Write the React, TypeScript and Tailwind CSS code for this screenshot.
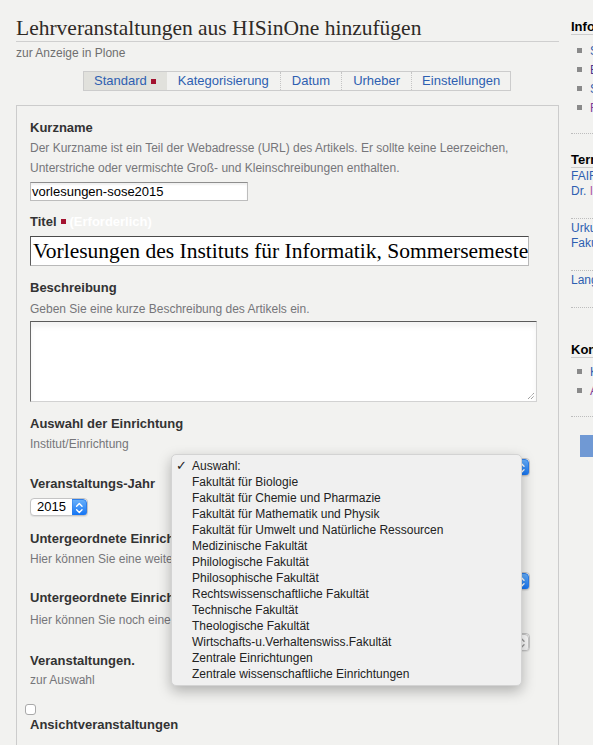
import React from "react";

const Stepper = ({ disabled = false }: { disabled?: boolean }) => (
  <svg width="15" height="18" viewBox="0 0 15 18" className="block">
    <defs>
      <linearGradient id={disabled ? "sgd" : "sg"} x1="0" y1="0" x2="0" y2="1">
        <stop offset="0" stopColor={disabled ? "#ffffff" : "#69b1fb"} />
        <stop offset="1" stopColor={disabled ? "#f4f4f4" : "#0d6ff3"} />
      </linearGradient>
    </defs>
    <path
      d="M0 0.5 H11 A3.5 3.5 0 0 1 14.5 4 V14 A3.5 3.5 0 0 1 11 17.5 H0 Z"
      fill={`url(#${disabled ? "sgd" : "sg"})`}
      stroke={disabled ? "#c8c8c8" : "#2f7ee8"}
      strokeWidth="1"
    />
    <path d="M4.6 7.2 L7.3 4.6 L10 7.2" fill="none" stroke={disabled ? "#9a9a9a" : "#fff"} strokeWidth="1.4" strokeLinecap="round" strokeLinejoin="round" />
    <path d="M4.6 10.8 L7.3 13.4 L10 10.8" fill="none" stroke={disabled ? "#9a9a9a" : "#fff"} strokeWidth="1.4" strokeLinecap="round" strokeLinejoin="round" />
  </svg>
);

const WideSelect = ({ disabled = false }: { disabled?: boolean }) => (
  <div className="flex justify-end w-[500px] h-[18px]">
    <div className="flex h-[18px] w-[340px] rounded-[4px] bg-white border border-[#c4c4c4] shadow-[0_1px_1px_rgba(0,0,0,0.08)] overflow-hidden">
      <div className="flex-1" />
      <Stepper disabled={disabled} />
    </div>
  </div>
);

const Label = ({ children, className = "" }: { children: React.ReactNode; className?: string }) => (
  <div className={`text-[13px] leading-[16px] font-bold text-[#333] ${className}`}>{children}</div>
);

const Help = ({ children, className = "" }: { children: React.ReactNode; className?: string }) => (
  <div className={`text-[12px] leading-[20px] text-[#76767a] ${className}`}>{children}</div>
);

const RedSq = () => <span className="inline-block w-[5px] h-[5px] bg-[#a3122f] ml-[4px] align-middle relative top-[-1px]" />;

const menuItems = [
  "Fakultät für Biologie",
  "Fakultät für Chemie und Pharmazie",
  "Fakultät für Mathematik und Physik",
  "Fakultät für Umwelt und Natürliche Ressourcen",
  "Medizinische Fakultät",
  "Philologische Fakultät",
  "Philosophische Fakultät",
  "Rechtswissenschaftliche Fakultät",
  "Technische Fakultät",
  "Theologische Fakultät",
  "Wirtschafts-u.Verhaltenswiss.Fakultät",
  "Zentrale Einrichtungen",
  "Zentrale wissenschaftliche Einrichtungen",
];

const Bullet = ({ children, color = "text-[#2e5fb1]" }: { children: React.ReactNode; color?: string }) => (
  <div className="flex items-center h-[19px]">
    <span className="w-[5px] h-[5px] bg-[#8a8a8a] ml-[6px] mr-[8px] shrink-0" />
    <span className={`text-[12px] ${color} whitespace-nowrap`}>{children}</span>
  </div>
);

const Dotted = ({ className = "" }: { className?: string }) => (
  <div className={`border-t border-dotted border-[#bdbdbd] w-[200px] ${className}`} />
);

export default function App() {
  return (
    <div className="relative w-[593px] h-[745px] overflow-hidden bg-[#f2f2f0] flex font-['Liberation_Sans',Arial,sans-serif]">
      {/* main column */}
      <div className="w-[543px] ml-[16px] shrink-0">
        <h1 className="pt-[15px] leading-[26px] text-[21.5px] text-[#2f2a26] font-['Liberation_Serif','Times_New_Roman',serif] font-normal border-b border-[#cfcfcf] whitespace-nowrap">
          Lehrveranstaltungen aus HISinOne hinzufügen
        </h1>
        <div className="mt-[3px] text-[12px] leading-[16px] text-[#6f6f6f]">zur Anzeige in Plone</div>

        {/* tabs */}
        <div className="mt-[10px] ml-[67px] flex w-fit h-[20px] border border-[#cccccc] text-[13px] leading-[18px] text-[#2e5fb1]">
          <div className="pl-[10px] pr-[11px] bg-[#e1e1dc] flex items-center">
            Standard
            <span className="inline-block w-[5px] h-[5px] bg-[#a3122f] ml-[4px]" />
          </div>
          <div className="px-[11px]">Kategorisierung</div>
          <div className="px-[11px] border-l border-dotted border-[#c4c4c4]">Datum</div>
          <div className="px-[11px] border-l border-dotted border-[#c4c4c4]">Urheber</div>
          <div className="px-[10px] border-l border-dotted border-[#c4c4c4]">Einstellungen</div>
        </div>

        {/* fieldset */}
        <div className="mt-[14px] h-[700px] border border-[#cccccc] pl-[13px]">
          <Label className="mt-[14px]">Kurzname</Label>
          <Help className="mt-[2px]">
            Der Kurzname ist ein Teil der Webadresse (URL) des Artikels. Er sollte keine Leerzeichen,
            <br />
            Unterstriche oder vermischte Groß- und Kleinschreibungen enthalten.
          </Help>
          <div className="mt-[4px] w-[218px] h-[19px] bg-white border border-[#bdbdbd] border-t-[#8e8e8e] shadow-[inset_0_2px_2px_rgba(0,0,0,0.06)] text-[13px] leading-[17px] pl-[1px] text-black whitespace-nowrap overflow-hidden">
            vorlesungen-sose2015
          </div>

          <Label className="mt-[13px]">
            Titel
            <RedSq />
            <span className="ml-[4px] text-white font-bold">(Erforderlich)</span>
          </Label>
          <div className="mt-[6px] w-[499px] h-[30px] bg-white border border-[#b9b9b9] border-t-[#4a4a4a] border-l-[#5a5a5a] overflow-hidden whitespace-nowrap pl-[2px] text-[21.5px] leading-[28px] text-black font-['Liberation_Serif','Times_New_Roman',serif]">
            Vorlesungen des Instituts für Informatik, Sommersemester 2015
          </div>

          <Label className="mt-[14px]">Beschreibung</Label>
          <Help className="mt-[3px]">Geben Sie eine kurze Beschreibung des Artikels ein.</Help>
          <div className="relative mt-[2px] w-[507px] h-[81px] bg-white border border-[#d2d2d2] border-t-[#5a5a5a] border-l-[#6a6a6a] shadow-[inset_0_5px_5px_rgba(0,0,0,0.05)]">
            <svg width="8" height="8" viewBox="0 0 8 8" className="absolute right-[1px] bottom-[1px]">
              <path d="M1 7 L7 1 M4 7 L7 4" stroke="#555" strokeWidth="0.8" strokeDasharray="1 0.8" />
            </svg>
          </div>

          <Label className="mt-[14px]">Auswahl der Einrichtung</Label>
          <Help className="mt-[2px]">Institut/Einrichtung</Help>
          <div className="mt-[4px]">
            <WideSelect />
          </div>

          <Label className="mt-0">Veranstaltungs-Jahr</Label>
          <div className="mt-[6px] flex w-[58px] h-[18px] rounded-[4px] bg-white border border-[#c4c4c4] shadow-[0_1px_1px_rgba(0,0,0,0.08)] overflow-hidden">
            <div className="flex-1 text-[13px] leading-[16px] text-black pl-[6px]">2015</div>
            <Stepper />
          </div>

          <Label className="mt-[15px] whitespace-nowrap">Untergeordnete Einrichtung</Label>
          <Help className="mt-[2px] whitespace-nowrap">Hier können Sie eine weitere Einrichtung auswählen.</Help>
          <div className="mt-[3px]">
            <WideSelect />
          </div>

          <Label className="mt-0 whitespace-nowrap">Untergeordnete Einrichtung</Label>
          <Help className="mt-[4px] whitespace-nowrap">Hier können Sie noch eine Einrichtung auswählen.</Help>
          <div className="mt-[3px]">
            <WideSelect disabled />
          </div>

          <Label className="mt-[2px]">Veranstaltungen.</Label>
          <Help className="mt-[1px]">zur Auswahl</Help>
          <div className="mt-[14px] -ml-[5px] w-[11px] h-[11px] rounded-[3px] bg-white border border-[#a9a9a9]" />
          <Label className="mt-[2px]">Ansichtveranstaltungen</Label>
        </div>
      </div>

      {/* sidebar */}
      <div className="ml-[12px] w-[200px] shrink-0">
        <div className="mt-[20px] text-[13px] leading-[14px] font-bold text-black border-b border-[#cccccc] whitespace-nowrap">Informationen</div>
        <div className="mt-[6px]">
          <Bullet>Startseite</Bullet>
          <Bullet color="text-[#4b3a8f]">Einrichtungen</Bullet>
          <Bullet>Studium</Bullet>
          <Bullet color="text-[#7d3f98]">Forschung</Bullet>
        </div>
        <Dotted className="mt-[16px]" />
        <div className="mt-[19px] text-[13px] leading-[14px] font-bold text-black border-b border-[#cccccc] whitespace-nowrap">Termine</div>
        <div className="mt-[1px] text-[12px] leading-[15px] text-[#2e5fb1] whitespace-nowrap">
          <div>FAIR Kolloquium</div>
          <div>
            Dr. <span className="text-[#b05ba8]">Informatik</span>
          </div>
        </div>
        <Dotted className="mt-[19px]" />
        <div className="mt-[2px] text-[12px] leading-[15px] text-[#2e5fb1] whitespace-nowrap">
          <div>Urkunden</div>
          <div>Fakultät</div>
        </div>
        <Dotted className="mt-[19px]" />
        <div className="mt-[2px] text-[12px] leading-[15px] text-[#2e5fb1] whitespace-nowrap">Lange Nacht</div>
        <Dotted className="mt-[19px]" />
        <div className="mt-[35px] text-[13px] leading-[14px] font-bold text-black border-b border-[#cccccc] whitespace-nowrap">Kontakt</div>
        <div className="mt-[4px]">
          <Bullet>Kontakt</Bullet>
          <Bullet color="text-[#7d3f98]">Anfahrt</Bullet>
        </div>
        <Dotted className="mt-[16px]" />
        <div className="mt-[18px] ml-[9px] w-[100px] h-[22px] bg-[#7099d4]" />
      </div>

      {/* open popup menu */}
      <div className="absolute left-[171px] top-[454px] w-[351px] h-[232px] rounded-[5px] bg-[#f0f0f0] border border-[#d3d3d3] shadow-[0_5px_14px_rgba(0,0,0,0.28)] py-[3px] text-[12px] text-[#222]">
        <div className="flex h-[16px] items-center">
          <span className="w-[20px] pl-[4px] text-[13px] font-bold font-['DejaVu_Sans',sans-serif] text-[#222]">✓</span>
          <span>Auswahl:</span>
        </div>
        {menuItems.map((m) => (
          <div key={m} className="flex h-[16px] items-center pl-[20px] whitespace-nowrap">
            {m}
          </div>
        ))}
      </div>
    </div>
  );
}
